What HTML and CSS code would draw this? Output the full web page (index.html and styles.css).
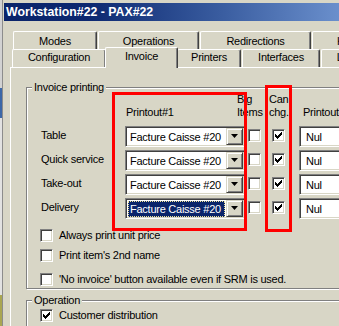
FILE: index.html
```html
<!DOCTYPE html>
<html lang="en">
<head>
<meta charset="utf-8">
<title>Workstation#22 - PAX#22</title>
<link rel="stylesheet" href="styles.css">
</head>
<body>
<div class="screen">
  <div class="desk">
    <span class="desk-a"></span>
    <span class="desk-b"></span>
    <span class="desk-c"></span>
    <span class="desk-d"></span>
  </div>
  <div class="window">
    <div class="titlebar">Workstation#22 - PAX#22</div>
    <div class="client">
      <div class="tabrow back">
        <div class="tab t-modes">Modes</div>
        <div class="tab t-oper">Operations</div>
        <div class="tab t-redir">Redirections</div>
        <div class="tab t-kitchen">Kitchen</div>
      </div>
      <div class="tabrow front">
        <div class="tab t-config">Configuration</div>
        <div class="tab t-invoice selected">Invoice</div>
        <div class="tab t-printers">Printers</div>
        <div class="tab t-interfaces">Interfaces</div>
        <div class="tab t-layout">Layout</div>
      </div>
      <div class="page">
        <div class="group g-invoice">
          <div class="legend">Invoice printing</div>
          <div class="head">
            <div class="h-label"></div>
            <div class="h-p1">Printout#1</div>
            <div class="h-big">Big<br>Items</div>
            <div class="h-can">Can<br>chg.</div>
            <div class="h-p2">Printout#2</div>
          </div>
          <div class="rows">
            <div class="row">
              <div class="lbl">Table</div>
              <div class="combo c-main"><div class="ctext">Facture Caisse #20</div><div class="cbtn"><svg width="7" height="4" viewBox="0 0 7 4"><path d="M0 0h7L3.5 4z"/></svg></div></div>
              <div class="cb cb-big"></div>
              <div class="cb cb-can"><svg width="11" height="11" viewBox="1 1 11 11" shape-rendering="crispEdges"><path d="M9 3h1v1h-1zM8 4h2v1h-2zM3 5h1v1h-1zM7 5h3v1h-3zM3 6h2v1h-2zM6 6h3v1h-3zM3 7h5v1h-5zM4 8h3v1h-3zM5 9h1v1h-1z"/></svg></div>
              <div class="combo c-nul"><div class="ctext">Nul</div><div class="cbtn"><svg width="7" height="4" viewBox="0 0 7 4"><path d="M0 0h7L3.5 4z"/></svg></div></div>
            </div>
            <div class="row">
              <div class="lbl">Quick service</div>
              <div class="combo c-main"><div class="ctext">Facture Caisse #20</div><div class="cbtn"><svg width="7" height="4" viewBox="0 0 7 4"><path d="M0 0h7L3.5 4z"/></svg></div></div>
              <div class="cb cb-big"></div>
              <div class="cb cb-can"><svg width="11" height="11" viewBox="1 1 11 11" shape-rendering="crispEdges"><path d="M9 3h1v1h-1zM8 4h2v1h-2zM3 5h1v1h-1zM7 5h3v1h-3zM3 6h2v1h-2zM6 6h3v1h-3zM3 7h5v1h-5zM4 8h3v1h-3zM5 9h1v1h-1z"/></svg></div>
              <div class="combo c-nul"><div class="ctext">Nul</div><div class="cbtn"><svg width="7" height="4" viewBox="0 0 7 4"><path d="M0 0h7L3.5 4z"/></svg></div></div>
            </div>
            <div class="row">
              <div class="lbl">Take-out</div>
              <div class="combo c-main"><div class="ctext">Facture Caisse #20</div><div class="cbtn"><svg width="7" height="4" viewBox="0 0 7 4"><path d="M0 0h7L3.5 4z"/></svg></div></div>
              <div class="cb cb-big"></div>
              <div class="cb cb-can"><svg width="11" height="11" viewBox="1 1 11 11" shape-rendering="crispEdges"><path d="M9 3h1v1h-1zM8 4h2v1h-2zM3 5h1v1h-1zM7 5h3v1h-3zM3 6h2v1h-2zM6 6h3v1h-3zM3 7h5v1h-5zM4 8h3v1h-3zM5 9h1v1h-1z"/></svg></div>
              <div class="combo c-nul"><div class="ctext">Nul</div><div class="cbtn"><svg width="7" height="4" viewBox="0 0 7 4"><path d="M0 0h7L3.5 4z"/></svg></div></div>
            </div>
            <div class="row">
              <div class="lbl">Delivery</div>
              <div class="combo c-main"><div class="ctext"><div class="hl">Facture Caisse #20</div></div><div class="cbtn"><svg width="7" height="4" viewBox="0 0 7 4"><path d="M0 0h7L3.5 4z"/></svg></div></div>
              <div class="cb cb-big"></div>
              <div class="cb cb-can"><svg width="11" height="11" viewBox="1 1 11 11" shape-rendering="crispEdges"><path d="M9 3h1v1h-1zM8 4h2v1h-2zM3 5h1v1h-1zM7 5h3v1h-3zM3 6h2v1h-2zM6 6h3v1h-3zM3 7h5v1h-5zM4 8h3v1h-3zM5 9h1v1h-1z"/></svg></div>
              <div class="combo c-nul"><div class="ctext">Nul</div><div class="cbtn"><svg width="7" height="4" viewBox="0 0 7 4"><path d="M0 0h7L3.5 4z"/></svg></div></div>
            </div>
          </div>
          <div class="opt o-always"><div class="cb"></div><span>Always print unit price</span></div>
          <div class="opt o-second"><div class="cb"></div><span>Print item's 2nd name</span></div>
          <div class="opt o-noinv"><div class="cb"></div><span>'No invoice' button available even if SRM is used.</span></div>
        </div>
        <div class="group g-oper">
          <div class="legend">Operation</div>
          <div class="opt o-cust"><div class="cb"><svg width="11" height="11" viewBox="1 1 11 11" shape-rendering="crispEdges"><path d="M9 3h1v1h-1zM8 4h2v1h-2zM3 5h1v1h-1zM7 5h3v1h-3zM3 6h2v1h-2zM6 6h3v1h-3zM3 7h5v1h-5zM4 8h3v1h-3zM5 9h1v1h-1z"/></svg></div><span>Customer distribution</span></div>
        </div>
      </div>
    </div>
  </div>
  <div class="mark mark-a"></div>
  <div class="mark mark-b"></div>
</div>
</body>
</html>
```
FILE: styles.css
```css
:root {
  --face: #d8d6c6;
  --shadow: #808080;
  --dark: #404040;
  --hi: #ffffff;
}
* { box-sizing: border-box; }
html, body { margin: 0; padding: 0; }
body {
  width: 339px;
  height: 326px;
  overflow: hidden;
  background: var(--face);
  font-family: "Liberation Sans", Arial, sans-serif;
  font-size: 11px;
  letter-spacing: -0.25px;
  color: #000;
}
.screen {
  position: relative;
  display: flex;
  width: 339px;
  height: 326px;
  overflow: hidden;
}

/* desktop sliver on the left */
.desk {
  flex: none;
  width: 3px;
  display: flex;
  flex-direction: column;
  border-right: 1px solid #8c8c8c;
  background: #d2d2d2;
}
.desk span { display: block; }
.desk-a { height: 88px; background: #d2d2d2; }
.desk-b { height: 30px; background: #3d68a8; }
.desk-c { height: 177px; background: #e2e2e2; }
.desk-d { flex: 1; background: #a9a652; }

/* window */
.window {
  flex: 1;
  min-width: 0;
  padding: 3px 0 0 1px;
  background: var(--face);
  overflow: hidden;
}
.titlebar {
  height: 18px;
  padding: 1px 0 0 2px;
  line-height: 17px;
  font-size: 12.3px;
  font-weight: bold;
  letter-spacing: 0;
  color: #fff;
  white-space: nowrap;
  background: linear-gradient(to right, #0a246a 0%, #0c2870 25%, #3a5da0 65%, #6a8fcc 100%);
}
.client {
  padding: 10px 0 0 6px;
}

/* tabs */
.tabrow {
  display: flex;
  height: 18px;
  white-space: nowrap;
}
.back { padding-left: 3px; }
.front { padding-left: 2px; }
.tab {
  flex: none;
  height: 18px;
  margin-right: 1px;
  border: 1px solid var(--hi);
  border-right-color: var(--dark);
  border-bottom: 0;
  border-radius: 2px 2px 0 0;
  box-shadow: inset -1px 0 0 var(--shadow);
  background: var(--face);
  text-align: center;
  line-height: 13px;
  overflow: hidden;
}
.back .tab { padding-top: 3px; }
.front .tab { padding-top: 1px; }
.t-modes { width: 84px; }
.t-oper { width: 101px; }
.t-redir { width: 111px; }
.t-kitchen { width: 85px; }
.t-config { width: 94px; }
.t-invoice { width: 73px; }
.t-printers { width: 64px; }
.t-interfaces { width: 78px; }
.t-layout { width: 63px; }
.front .tab.selected {
  position: relative;
  z-index: 2;
  height: 21px;
  margin: -2px -1px 0 -2px;
  padding-top: 2px;
}

/* tab page */
.page {
  position: relative;
  z-index: 1;
  width: 400px;
  height: 300px;
  padding: 19px 0 0 15px;
  border-top: 1px solid var(--hi);
  border-left: 1px solid var(--hi);
  background: var(--face);
}

/* group boxes */
.group {
  position: relative;
  width: 360px;
  border: 1px solid var(--shadow);
  box-shadow: inset 1px 1px 0 var(--hi), 1px 1px 0 var(--hi);
  padding-left: 13px;
}
.g-invoice { height: 202px; padding-top: 5px; }
.g-oper { height: 60px; margin-top: 11px; padding-top: 8px; }
.legend {
  position: absolute;
  left: 5px;
  top: -7px;
  padding: 0 2px;
  line-height: 13px;
  background: var(--face);
  white-space: nowrap;
}

/* column headers */
.head {
  display: flex;
  align-items: flex-end;
  height: 26px;
  line-height: 13px;
  white-space: nowrap;
}
.h-label { width: 85px; flex: none; }
.h-p1 { width: 112px; flex: none; padding-left: 1px; }
.h-big { width: 32px; flex: none; }
.h-can { width: 34px; flex: none; }
.h-p2 { flex: none; }

/* rows */
.rows {
  display: flex;
  flex-direction: column;
  gap: 3px;
  margin-top: 7px;
}
.row {
  display: flex;
  align-items: flex-start;
  height: 21px;
}
.lbl {
  flex: none;
  width: 85px;
  padding-left: 1px;
  line-height: 19px;
  white-space: nowrap;
}

.combo {
  flex: none;
  display: flex;
  height: 21px;
  padding: 1px;
  border: 1px solid;
  border-color: var(--shadow) var(--hi) var(--hi) var(--shadow);
  box-shadow: inset 1px 1px 0 var(--dark), inset -1px -1px 0 var(--face);
  background: #fff;
}
.c-main { width: 120px; }
.c-nul { width: 100px; margin-left: 14px; }
.ctext {
  flex: 1;
  min-width: 0;
  padding: 2px 0 0 3px;
  line-height: 15px;
  white-space: nowrap;
  overflow: hidden;
}
.c-nul .ctext { padding-left: 5px; }
.ctext:has(.hl) { padding: 1px 1px 0 1px; }
.hl {
  height: 16px;
  padding-left: 1px;
  border: 1px dotted #efe29a;
  background: #0a246a;
  color: #fff;
  line-height: 14px;
}
.cbtn {
  flex: none;
  width: 17px;
  height: 17px;
  display: flex;
  align-items: center;
  justify-content: center;
  padding-bottom: 1px;
  border: 1px solid;
  border-color: var(--face) var(--dark) var(--dark) var(--face);
  box-shadow: inset 1px 1px 0 var(--hi), inset -1px -1px 0 var(--shadow);
  background: var(--face);
}
.cbtn svg { display: block; fill: #000; }

/* checkboxes */
.cb {
  flex: none;
  width: 13px;
  height: 13px;
  border: 1px solid;
  border-color: var(--shadow) var(--hi) var(--hi) var(--shadow);
  box-shadow: inset 1px 1px 0 var(--dark), inset -1px -1px 0 var(--face);
  background: #fff;
}
.cb svg { display: block; fill: #000; }
.cb-big { margin: 3px 0 0 3px; }
.cb-can { margin: 3px 0 0 11px; }

.opt {
  display: flex;
  align-items: flex-start;
  gap: 6px;
  line-height: 13px;
  white-space: nowrap;
}
.o-always { margin-top: 10px; }
.o-second { margin-top: 7px; }
.o-noinv { margin-top: 11px; }

/* red annotation boxes drawn over the dialog */
.mark {
  position: absolute;
  z-index: 5;
  border: 3px solid #ff0000;
}
.mark-a { left: 112px; top: 92px; width: 135px; height: 139px; }
.mark-b { left: 265px; top: 85px; width: 27px; height: 147px; }
```
